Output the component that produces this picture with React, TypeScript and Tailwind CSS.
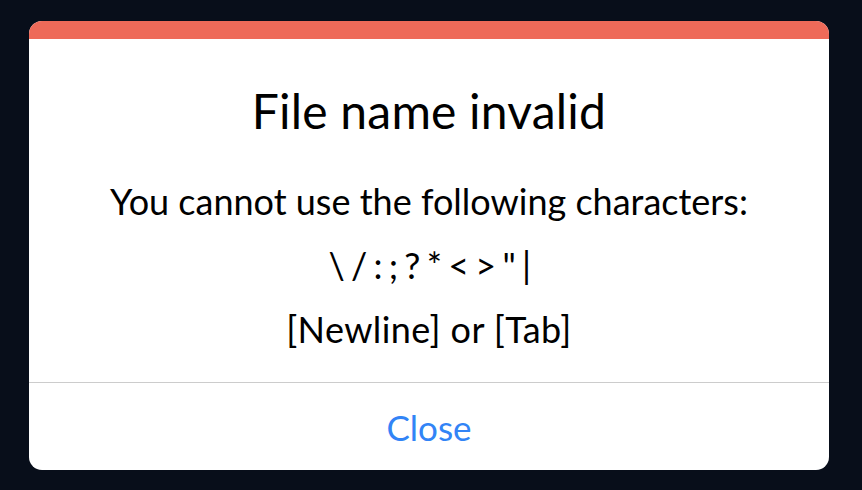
import React from 'react';

const font = { fontFamily: 'Lato, "Noto Sans", sans-serif' };

const App: React.FC = () => {
  return (
    <div className="w-[862px] h-[490px] bg-[#080e1a] pt-[21px] pl-[29px]" style={font}>
      <div className="w-[800px] h-[449px] bg-white rounded-[13px] overflow-hidden flex flex-col">
        <div className="h-[18px] bg-[#ee6a59]" />
        <div className="flex-1 flex flex-col items-center text-black">
          <h1 className="mt-[44px] text-[48px] leading-[56px] tracking-[0.2px]">File name invalid</h1>
          <p className="mt-[30px] text-[36px] leading-[64px]">You cannot use the following characters:</p>
          <p className="text-[36px] leading-[64px] tracking-[-1.5px]">\ / : ; ? * &lt; &gt; " |</p>
          <p className="text-[36px] leading-[64px] tracking-[0.4px]">[Newline] or [Tab]</p>
        </div>
        <div className="h-[88px] border-t border-[#cccccc] flex items-center justify-center">
          <button className="text-[35px] leading-[44px] text-[#3284f6]">Close</button>
        </div>
      </div>
    </div>
  );
};

export default App;
